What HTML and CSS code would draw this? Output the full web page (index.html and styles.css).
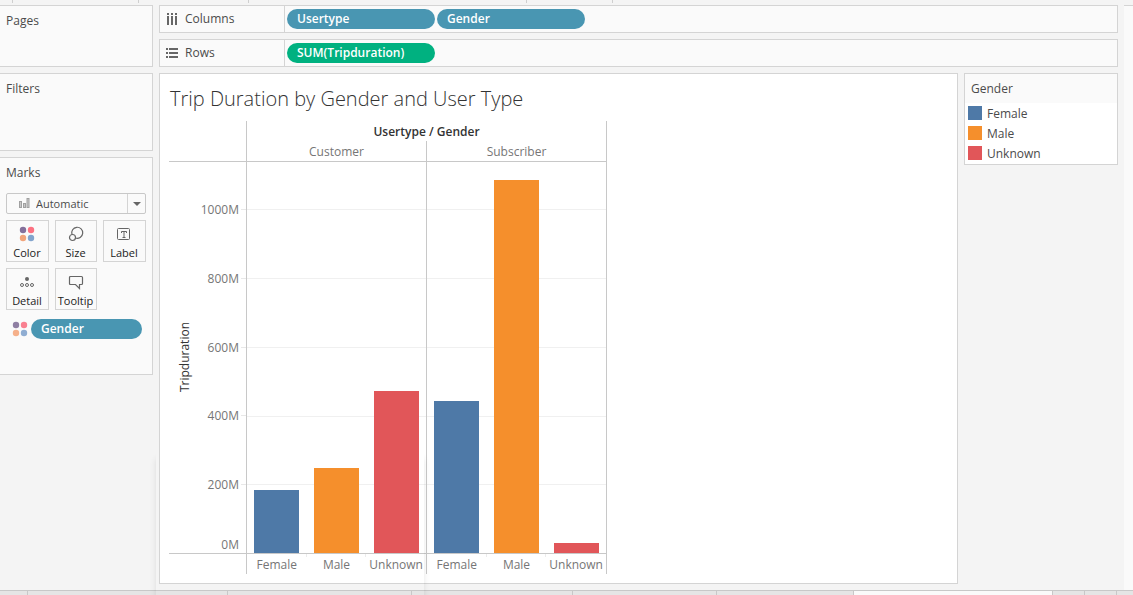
FILE: index.html
```html
<!DOCTYPE html>
<html lang="en">
<head>
<meta charset="utf-8">
<meta name="viewport" content="width=device-width, initial-scale=1">
<title>Trip Duration by Gender and User Type</title>
<link rel="stylesheet" href="styles.css">
</head>
<body>
<div class="app">
  <div class="toolbar-edge" aria-hidden="true">
    <i style="width:13px"></i><i style="width:126px"></i><i style="width:110px"></i><i style="width:278px"></i><i style="width:86px"></i>
  </div>

  <div class="workspace">
    <aside class="sidebar">
      <section class="card card-pages"><h2>Pages</h2></section>
      <section class="card card-filters"><h2>Filters</h2></section>
      <section class="card card-marks">
        <h2 id="marks-title">Marks</h2>
        <div class="mark-type">
          <svg class="mark-type-icon" width="11" height="11" viewBox="0 0 11 11" fill="#c9c9c9" stroke="#a0a0a0"><rect x=".5" y="3.5" width="2" height="6"/><rect x="4.500" y="5.500" width="2" height="4"/><rect x="8" y=".5" width="2" height="9"/></svg>
          <select aria-labelledby="marks-title"><option>Automatic</option></select>
          <span class="mark-type-arrow" aria-hidden="true"></span>
        </div>
        <div class="mark-buttons">
          <button type="button"><svg width="16" height="16" viewBox="0 0 16 16"><circle cx="4" cy="4" r="3.2" fill="#84709b"/><circle cx="12" cy="4" r="3.2" fill="#fc7181"/><circle cx="4" cy="12" r="3.2" fill="#f1a47a"/><circle cx="12" cy="12" r="3.2" fill="#82a4cd"/></svg><span>Color</span></button>
          <button type="button"><svg width="16" height="16" viewBox="0 0 16 16" fill="none" stroke="#666" stroke-width="1.2"><path d="M4 8.500A5.500 5.500 0 1 1 7.500 12"/><circle cx="4.500" cy="11.500" r="3"/></svg><span>Size</span></button>
          <button type="button"><svg width="16" height="16" viewBox="0 0 16 16" fill="none" stroke="#666"><rect x="1.500" y="2.500" width="12" height="11" rx="1"/><path d="M5.500 7V5.500h5V7M8 5.500v6M6.500 11.500h3"/></svg><span>Label</span></button>
          <button type="button"><svg width="16" height="16" viewBox="0 0 16 16" fill="none" stroke="#666"><circle cx="8" cy="5" r="2" fill="#666" stroke="none"/><circle cx="3" cy="11" r="1.500"/><circle cx="8" cy="11" r="1.500"/><circle cx="13" cy="11" r="1.500"/></svg><span>Detail</span></button>
          <button type="button"><svg width="16" height="16" viewBox="0 0 16 16" fill="none" stroke="#666" stroke-width="1.200"><path d="M2.500 2.500h11q1 0 1 1v6q0 1-1 1h-2v4l-4-4h-5q-1 0-1-1v-6q0-1 1-1z"/></svg><span>Tooltip</span></button>
        </div>
        <div class="mark-field">
          <svg width="16" height="16" viewBox="0 0 16 16"><circle cx="4" cy="4" r="3.200" fill="#8f7fa3"/><circle cx="12" cy="4" r="3.200" fill="#f98090"/><circle cx="4" cy="12" r="3.200" fill="#f5b08a"/><circle cx="12" cy="12" r="3.200" fill="#8fadd2"/></svg>
          <button type="button" class="pill">Gender</button>
        </div>
      </section>
    </aside>

    <main class="content">
      <section class="shelf">
        <h2><svg width="12" height="12" viewBox="0 0 12 12" fill="#666"><path d="M1 0h2v2H1zM5 0h2v2H5zM9 0h2v2H9zM1 3h2v9H1zM5 3h2v9H5zM9 3h2v9H9z"/></svg>Columns</h2>
        <div class="shelf-fields"><button type="button" class="pill">Usertype</button><button type="button" class="pill">Gender</button></div>
      </section>
      <section class="shelf">
        <h2><svg width="12" height="12" viewBox="0 0 12 12" fill="#666"><path d="M0 1h2v2H0zM0 5h2v2H0zM0 9h2v2H0zM3 1h9v2H3zM3 5h9v2H3zM3 9h9v2H3z"/></svg>Rows</h2>
        <div class="shelf-fields"><button type="button" class="pill measure">SUM(Tripduration)</button></div>
      </section>

      <div class="view">
        <section class="sheet">
          <h1>Trip Duration by Gender and User Type</h1>
          <div class="chart">
            <div class="corner"></div>
            <div class="heading">
              <strong>Usertype&nbsp;/&nbsp;Gender</strong>
              <div class="types"><span>Customer</span><span>Subscriber</span></div>
            </div>
            <div class="axis">
              <span class="axis-title">Tripduration</span>
              <ol class="ticks"><li>1000M</li><li>800M</li><li>600M</li><li>400M</li><li>200M</li></ol>
              <span class="zero">0M</span>
            </div>
            <div class="plot">
              <div class="pane">
                <i class="female" style="height:16.1%"></i><i class="male" style="height:21.700%"></i><i class="unknown" style="height:41.400%"></i>
              </div>
              <div class="pane">
                <i class="female" style="height:38.900%"></i><i class="male" style="height:95.400%"></i><i class="unknown" style="height:2.600%"></i>
              </div>
            </div>
            <div class="corner-foot"></div>
            <div class="footing">
              <div><span>Female</span><span>Male</span><span>Unknown</span></div>
              <div><span>Female</span><span>Male</span><span>Unknown</span></div>
            </div>
          </div>
        </section>
        <aside class="legend">
          <h2>Gender</h2>
          <ul>
            <li><i class="female"></i><span>Female</span></li>
            <li><i class="male"></i><span>Male</span></li>
            <li><i class="unknown"></i><span>Unknown</span></li>
          </ul>
        </aside>
      </div>
    </main>
    <div class="side-pane"></div>
  </div>

  <div class="tabs" aria-hidden="true">
    <i style="width:28px"></i><i style="width:200px"></i><i style="width:184px"></i><i style="width:161px"></i><i style="width:144px"></i><i style="width:137px"></i><i class="active" style="width:199px"></i><i style="width:32px"></i><i style="width:32px"></i><i class="rest"></i>
  </div>
  <div class="ghost" aria-hidden="true"></div>
</div>
</body>
</html>
```
FILE: styles.css
```css
* { box-sizing: border-box; }

body {
  margin: 0;
  background: #f4f4f4;
  color: #4b4b4b;
  font: 12px/20px "Open Sans", "Noto Sans", sans-serif;
}

h1, h2, ul, ol { margin: 0; padding: 0; font-weight: 400; list-style: none; }
h2 { font-size: 12px; line-height: 20px; }
svg { display: block; flex: none; }
button, select { font: inherit; color: inherit; }

.app {
  position: relative;
  display: flex;
  flex-direction: column;
  min-height: 100vh;
  overflow: hidden;
}

.toolbar-edge { display: flex; height: 5px; }
.toolbar-edge i { height: 3px; border-right: 1px solid #cfcfcf; }

.workspace { flex: 1; display: flex; }

.sidebar {
  flex: none;
  width: 153px;
  display: flex;
  flex-direction: column;
  gap: 6px;
}
.card {
  padding: 5px 6px;
  background: #fafafa;
  border: 1px solid #d4d4d4;
  border-left: 0;
}
.card-pages { min-height: 62px; }
.card-filters { min-height: 78px; }
.card-marks { min-height: 218px; }

.mark-type { position: relative; margin-top: 10px; }
.mark-type select {
  display: block;
  width: 100%;
  height: 21px;
  padding: 0 0 0 29px;
  appearance: none;
  font-size: 11px;
  background: #fafafa;
  border: 1px solid #c8c8c8;
  border-radius: 2px;
}
.mark-type-icon { position: absolute; left: 13px; top: 5px; }
.mark-type-arrow {
  position: absolute;
  right: 1px;
  top: 1px;
  width: 18px;
  height: 19px;
  border-left: 1px solid #d4d4d4;
  pointer-events: none;
}
.mark-type-arrow::after {
  content: "";
  position: absolute;
  left: 5px;
  top: 8px;
  border: 4px solid transparent;
  border-top-color: #666;
  border-bottom: 0;
}

.mark-buttons {
  display: grid;
  grid-template-columns: 43px 42px 43px;
  justify-content: space-between;
  gap: 6px 0;
  margin-top: 6px;
}
.mark-buttons button {
  display: flex;
  flex-direction: column;
  align-items: center;
  gap: 4px;
  height: 42px;
  padding: 5px 1px 0 0;
  color: #222;
  font-size: 11px;
  line-height: 14px;
  background: #fafafa;
  border: 1px solid #d4d4d4;
}

.mark-field {
  display: flex;
  align-items: center;
  gap: 3px;
  margin: 9px 4px 0 6px;
}

.pill {
  width: 148px;
  height: 20px;
  padding: 0 10px;
  overflow: hidden;
  color: #fff;
  font-size: 12px;
  font-weight: 600;
  line-height: 20px;
  text-align: left;
  white-space: nowrap;
  background: #4996b2;
  border: 0;
  border-radius: 10px;
}
.pill.measure { background: #00b180; }

.content {
  flex: 1;
  min-width: 0;
  display: flex;
  flex-direction: column;
  gap: 6px;
  padding: 0 6px;
}

.shelf {
  display: flex;
  background: #fafafa;
  border: 1px solid #d4d4d4;
}
.shelf h2 {
  flex: none;
  display: flex;
  align-items: center;
  gap: 7px;
  width: 125px;
  height: 26px;
  padding-left: 6px;
  border-right: 1px solid #d4d4d4;
}
.shelf-fields { display: flex; align-items: center; gap: 2px; padding-left: 2px; }

.view { flex: 1; display: flex; align-items: flex-start; gap: 6px; }
.sheet {
  flex: 1;
  align-self: stretch;
  display: flex;
  flex-direction: column;
  margin-bottom: 6px;
  padding: 11px 9px 9px;
  background: #fff;
  border: 1px solid #d4d4d4;
}
.sheet h1 {
  padding-left: 1px;
  color: #333;
  font-size: 20px;
  font-weight: 300;
  line-height: 28px;
}

.chart {
  flex: 1;
  display: grid;
  grid-template-columns: 77px 361px;
  grid-template-rows: 40px minmax(200px, 1fr) 20px;
  margin-top: 8px;
  color: #767676;
}
.corner { border-bottom: 1px solid #c8c8c8; margin-bottom: -1px; }
.heading {
  display: flex;
  flex-direction: column;
  margin-bottom: -1px;
  text-align: center;
  border: solid #c8c8c8;
  border-width: 0 1px 1px;
}
.heading strong { height: 20px; color: #333; font-weight: 600; line-height: 22px; }
.types { display: grid; grid-template-columns: 179px 1fr; height: 20px; }
.types span { line-height: 22px; }
.types span + span { border-left: 1px solid #c8c8c8; }

.axis {
  position: relative;
  display: flex;
  justify-content: space-between;
  padding: 1px 0 0 7px;
  border-bottom: 1px solid #c8c8c8;
}
.axis-title {
  align-self: center;
  color: #333;
  line-height: 18px;
  writing-mode: vertical-rl;
  transform: rotate(180deg);
}
.ticks { display: flex; flex-direction: column; justify-content: flex-end; width: 50px; }
.ticks li {
  display: flex;
  align-items: flex-start;
  justify-content: flex-end;
  height: 17.6%;
  padding-right: 7px;
  background: linear-gradient(#e8e8e8, #e8e8e8) right top / 5px 1px no-repeat;
  line-height: 2px;
}
.zero { position: absolute; right: 7px; bottom: 0; line-height: 17px; }

.plot {
  display: grid;
  grid-template-columns: 179px 1fr;
  padding-top: 1px;
  border: solid #c8c8c8;
  border-width: 0 1px 1px;
}
.pane {
  display: grid;
  grid-template-columns: repeat(3, 45px);
  justify-content: space-around;
  align-items: end;
  background: linear-gradient(#f0f0f0, #f0f0f0) 0 12.1% / 100% 1px no-repeat,
    linear-gradient(#f0f0f0, #f0f0f0) 0 29.8% / 100% 1px no-repeat,
    linear-gradient(#f0f0f0, #f0f0f0) 0 47.5% / 100% 1px no-repeat,
    linear-gradient(#f0f0f0, #f0f0f0) 0 65.2% / 100% 1px no-repeat,
    linear-gradient(#f0f0f0, #f0f0f0) 0 82.6% / 100% 1px no-repeat;
}
.pane + .pane { border-left: 1px solid #c8c8c8; }
.female { background: #4e79a7; }
.male { background: #f58f2c; }
.unknown { background: #e15659; }

.footing {
  display: grid;
  grid-template-columns: 179px 1fr;
  border: solid #c8c8c8;
  border-width: 0 1px;
}
.footing div { display: grid; grid-template-columns: repeat(3, 1fr); height: 20px; }
.footing div + div { border-left: 1px solid #c8c8c8; }
.footing span {
  line-height: 22px;
  text-align: center;
  background: linear-gradient(#ececec, #ececec) right top / 1px 3px no-repeat;
}
.footing span:last-child { background: none; }

.legend { flex: none; width: 154px; background: #fff; border: 1px solid #d4d4d4; }
.legend h2 { padding: 5px 6px 4px; background: #fafafa; }
.legend li { display: flex; align-items: center; gap: 5px; height: 20px; padding-left: 3px; }
.legend li span { line-height: 20px; padding-top: 2px; }
.legend ul { padding-bottom: 1px; }
.legend li i { width: 14px; height: 14px; }

.side-pane { flex: none; width: 9px; background: #fafafa; border-top: 1px solid #d4d4d4; }

.tabs { display: flex; height: 5px; background: #e5e5e5; border-top: 1px solid #c8c8c8; }
.tabs i { flex: none; border-right: 1px solid #c8c8c8; }
.tabs .active { background: #fafafa; }
.tabs .rest { flex: 1; border: 0; }

/* faint shadow of a menu that is fading out */
.ghost {
  position: absolute;
  left: 156px;
  bottom: -20px;
  width: 268px;
  height: 163px;
  border-radius: 4px;
  box-shadow: 0 6px 6px rgba(0, 0, 0, 0.1);
  pointer-events: none;
}
```
